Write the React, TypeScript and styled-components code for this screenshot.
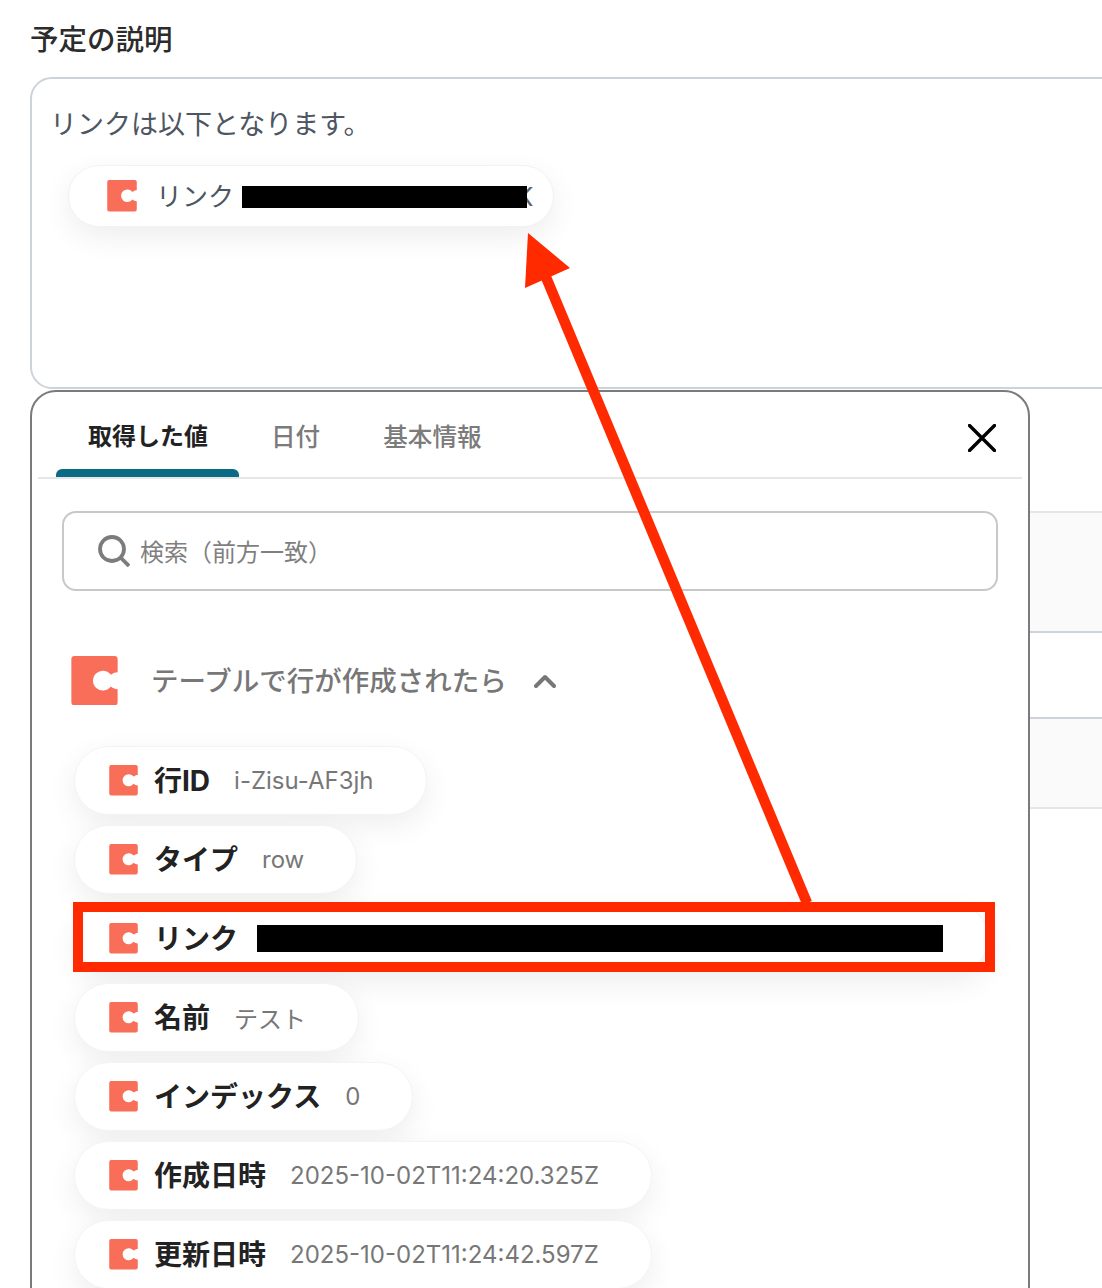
import styled, { createGlobalStyle } from "styled-components";

const GlobalStyle = createGlobalStyle`
  html, body {
    margin: 0;
    padding: 0;
    background: #fff;
  }
  * {
    box-sizing: border-box;
  }
`;

const fontStack = `Inter, "Noto Sans CJK JP", sans-serif`;

const chips = [
  { label: "行ID", value: "i-Zisu-AF3jh" },
  { label: "タイプ", value: "row" },
  { label: "リンク", redacted: true },
  { label: "名前", value: "テスト" },
  { label: "インデックス", value: "0" },
  { label: "作成日時", value: "2025-10-02T11:24:20.325Z" },
  { label: "更新日時", value: "2025-10-02T11:24:42.597Z" },
];

function CodaIcon({ size }: { size: number }) {
  return (
    <svg width={size} height={size * 1.05} viewBox="0 0 30 32" style={{ flexShrink: 0 }}>
      <path
        fill="#f86e58"
        d="M2 0H28a2 2 0 0 1 2 2V10.5C28.5 10.5 27 11 25.6 12.2A6.4 6.4 0 1 0 25.6 19.8C27 21 28.5 21.5 30 21.5V30a2 2 0 0 1-2 2H2a2 2 0 0 1-2-2V2a2 2 0 0 1 2-2Z"
      />
    </svg>
  );
}

function App() {
  return (
    <Page>
      <GlobalStyle />
      <Title>予定の説明</Title>
      <DescriptionBox>
        <DescriptionText>リンクは以下となります。</DescriptionText>
        <InsertedChip>
          <CodaIcon size={30} />
          <InsertedLabel>リンク</InsertedLabel>
          <InsertedRedaction />
          <InsertedTail>K</InsertedTail>
        </InsertedChip>
      </DescriptionBox>

      <BackdropTable>
        <BackdropRow $height={120} $shaded $topColor="#e6e6e6" />
        <BackdropRow $height={86} $topColor="#cdd3da" />
        <BackdropRow $height={90} $shaded $topColor="#cdd3da" />
        <BackdropEnd />
      </BackdropTable>

      <Panel>
        <TabBar>
          <Tab $active>取得した値</Tab>
          <Tab>日付</Tab>
          <Tab>基本情報</Tab>
          <CloseButton>
            <svg width="28" height="28" viewBox="0 0 28 28" fill="none" stroke="#000" strokeWidth="3.4" strokeLinecap="round">
              <path d="M1.5 1.5 26.5 26.5M26.5 1.5 1.5 26.5" />
            </svg>
          </CloseButton>
        </TabBar>

        <SearchBox>
          <svg width="32" height="32" viewBox="0 0 32 32" fill="none" stroke="#7c7c7c" strokeWidth="3.8">
            <circle cx="14" cy="14" r="12" />
            <path d="M22.5 22.5 31 31" />
          </svg>
          <SearchPlaceholder>検索（前方一致）</SearchPlaceholder>
        </SearchBox>

        <SectionHeader>
          <CodaIcon size={47} />
          <SectionTitle>テーブルで行が作成されたら</SectionTitle>
          <svg width="22" height="14" viewBox="0 0 22 14" fill="none" stroke="#777" strokeWidth="4" strokeLinecap="round" strokeLinejoin="round">
            <path d="M2 12 11 3 20 12" />
          </svg>
        </SectionHeader>

        <ChipList>
          {chips.map((chip) => (
            <Chip key={chip.label} $wide={chip.redacted}>
              <CodaIcon size={29} />
              <ChipLabel>{chip.label}</ChipLabel>
              {chip.redacted ? (
                <>
                  <ChipRedaction />
                  <Highlight />
                </>
              ) : (
                <ChipValue>{chip.value}</ChipValue>
              )}
            </Chip>
          ))}
        </ChipList>
      </Panel>

      <ArrowLayer width="1102" height="1288" viewBox="0 0 1102 1288">
        <path d="M538 258 807 903" stroke="#ff2a00" strokeWidth="10.5" fill="none" />
        <polygon points="528,233 570,268 525,288" fill="#ff2a00" />
      </ArrowLayer>
    </Page>
  );
}

const Page = styled.div`
  position: relative;
  width: 1102px;
  height: 1288px;
  overflow: hidden;
  background: #fff;
  padding: 22px 0 0 30px;
  font-family: ${fontStack};
`;

const Title = styled.div`
  height: 36px;
  font-size: 28.5px;
  line-height: 36px;
  font-weight: 500;
  color: #2c2c2c;
`;

const DescriptionBox = styled.div`
  width: 1110px;
  height: 312px;
  margin-top: 19px;
  padding: 27px 18px;
  border: 2px solid #cdd3da;
  border-radius: 22px;
`;

const DescriptionText = styled.div`
  font-size: 27px;
  line-height: 38px;
  color: #4d5661;
`;

const InsertedChip = styled.div`
  display: inline-flex;
  align-items: center;
  width: 486px;
  height: 62px;
  margin: 21px 0 0 18px;
  padding-left: 38px;
  background: #fff;
  border: 1px solid #f2f2f2;
  border-radius: 31px;
  box-shadow: 0 10px 30px rgba(0, 0, 0, 0.07);
`;

const InsertedLabel = styled.span`
  margin: 0 0 4px 19px;
  font-size: 26px;
  white-space: nowrap;
  color: #4d5661;
`;

const InsertedRedaction = styled.span`
  position: relative;
  z-index: 1;
  width: 285px;
  height: 22px;
  margin: 2px 0 0 8px;
  background: #000;
`;

const InsertedTail = styled.span`
  margin-left: -11px;
  font-size: 26px;
  color: #5d6670;
`;

const BackdropTable = styled.div`
  width: 1110px;
  margin-top: 122px;
`;

const BackdropRow = styled.div<{ $height: number; $shaded?: boolean; $topColor: string }>`
  height: ${(p) => p.$height}px;
  background: ${(p) => (p.$shaded ? "#fafafa" : "#fff")};
  border-top: 2px solid ${(p) => p.$topColor};
`;

const BackdropEnd = styled.div`
  border-top: 2px solid #e6e6e6;
`;

const Panel = styled.div`
  position: absolute;
  left: 30px;
  top: 390px;
  width: 1000px;
  height: 960px;
  background: #fff;
  border: 2px solid #7b7b7b;
  border-radius: 26px 26px 0 0;
`;

const TabBar = styled.div`
  display: flex;
  height: 87px;
  margin: 0 6px;
  padding: 0 26px 0 18px;
  border-bottom: 2px solid #e6e6e6;
`;

const Tab = styled.div<{ $active?: boolean }>`
  position: relative;
  padding: 27px 31px 0 32px;
  font-size: ${(p) => (p.$active ? "24px" : "24.6px")};
  line-height: 36px;
  font-weight: ${(p) => (p.$active ? 700 : 500)};
  color: ${(p) => (p.$active ? "#222" : "#7b7b7b")};

  &::after {
    content: "";
    display: ${(p) => (p.$active ? "block" : "none")};
    position: absolute;
    left: 0;
    right: 0;
    bottom: 0;
    height: 8px;
    background: #0b6b85;
    border-radius: 6px 6px 0 0;
  }
`;

const CloseButton = styled.div`
  margin: 32px 0 0 auto;
  width: 28px;
  height: 28px;
`;

const SearchBox = styled.div`
  display: flex;
  align-items: center;
  gap: 10px;
  width: 936px;
  height: 80px;
  margin: 32px 0 0 30px;
  padding-left: 34px;
  border: 2px solid #c8c8c8;
  border-radius: 14px;
`;

const SearchPlaceholder = styled.span`
  margin-bottom: 2px;
  font-size: 24px;
  color: #7f7f7f;
`;

const SectionHeader = styled.div`
  display: flex;
  align-items: center;
  height: 49px;
  margin: 65px 0 0 39px;
`;

const SectionTitle = styled.span`
  margin: 0 27px 4px 33px;
  font-size: 27.5px;
  font-weight: 500;
  color: #777;
`;

const ChipList = styled.div`
  display: flex;
  flex-direction: column;
  align-items: flex-start;
  gap: 10px;
  margin: 41px 0 0 42px;
`;

const Chip = styled.div<{ $wide?: boolean }>`
  position: relative;
  display: flex;
  align-items: center;
  height: 69px;
  width: ${(p) => (p.$wide ? "915px" : "auto")};
  padding: 0 52px 0 34px;
  background: #fff;
  border: 1px solid #f4f4f4;
  border-radius: 35px;
  box-shadow: 0 10px 30px rgba(0, 0, 0, 0.07);
`;

const ChipLabel = styled.span`
  margin: 0 0 3px 16px;
  font-size: 28px;
  font-weight: 700;
  white-space: nowrap;
  color: #222;
`;

const ChipValue = styled.span`
  margin-left: 24px;
  font-size: 24px;
  color: #777;
`;

const ChipRedaction = styled.span`
  flex-shrink: 0;
  width: 686px;
  height: 27px;
  margin-left: 19px;
  background: #000;
`;

const Highlight = styled.div`
  position: absolute;
  left: -2px;
  right: -7px;
  top: -3px;
  bottom: 0;
  border: 10px solid #ff2a00;
`;

const ArrowLayer = styled.svg`
  position: absolute;
  left: 0;
  top: 0;
  pointer-events: none;
`;

export default App;
